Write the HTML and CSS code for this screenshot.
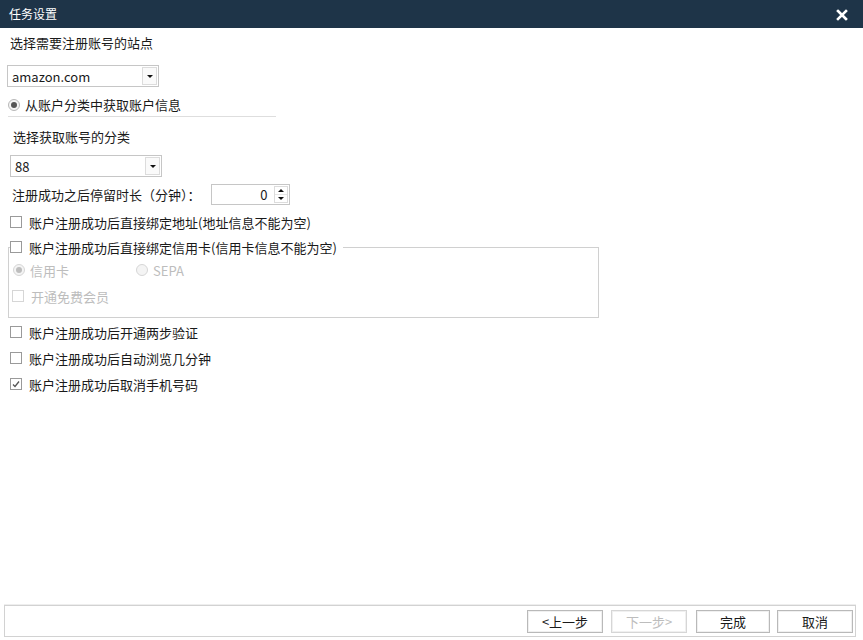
FILE: index.html
```html
<!DOCTYPE html>
<html lang="zh-CN">
<head>
    <meta charset="UTF-8">
    <title>任务设置</title>
    <link rel="stylesheet" href="styles.css">
</head>
<body>
<div class="dialog">
    <div class="titlebar">
        <span class="title">任务设置</span>
        <svg class="close" width="12" height="12" viewBox="0 0 12 12">
            <path d="M2 2 L10 10 M10 2 L2 10" stroke="#fff" stroke-width="2.6" stroke-linecap="square"/>
        </svg>
    </div>

    <div class="content">
        <div class="label site-label">选择需要注册账号的站点</div>
        <div class="combo site-combo">
            <span class="combo-text">amazon.com</span>
            <span class="combo-btn"><i class="arrow-down"></i></span>
        </div>

        <div class="radio-row source-row">
            <span class="radio checked"></span>
            <span>从账户分类中获取账户信息</span>
        </div>

        <div class="label cat-label">选择获取账号的分类</div>
        <div class="combo cat-combo">
            <span class="combo-text">88</span>
            <span class="combo-btn"><i class="arrow-down"></i></span>
        </div>

        <div class="spin-row">
            <span>注册成功之后停留时长（分钟）：</span>
            <div class="spin">
                <span class="spin-value">0</span>
                <span class="spin-btns">
                    <span class="spin-up"><i class="arrow-up"></i></span>
                    <span class="spin-down"><i class="arrow-down"></i></span>
                </span>
            </div>
        </div>

        <div class="check-row first-check">
            <span class="check"></span>
            <span>账户注册成功后直接绑定地址(地址信息不能为空)</span>
        </div>

        <fieldset class="group">
            <legend class="check-row">
                <span class="check"></span>
                <span>账户注册成功后直接绑定信用卡(信用卡信息不能为空)</span>
            </legend>
            <div class="group-radios disabled">
                <span class="radio-opt"><span class="radio checked"></span>信用卡</span>
                <span class="radio-opt sepa"><span class="radio"></span>SEPA</span>
            </div>
            <div class="check-row group-check disabled">
                <span class="check"></span>
                <span>开通免费会员</span>
            </div>
        </fieldset>

        <div class="check-row after-group">
            <span class="check"></span>
            <span>账户注册成功后开通两步验证</span>
        </div>
        <div class="check-row next-check">
            <span class="check"></span>
            <span>账户注册成功后自动浏览几分钟</span>
        </div>
        <div class="check-row next-check">
            <span class="check checked">
                <svg width="10" height="10" viewBox="0 0 10 10"><path d="M2 5.5 L4 7.5 L8 2.5" fill="none" stroke="#555" stroke-width="1.3"/></svg>
            </span>
            <span>账户注册成功后取消手机号码</span>
        </div>
    </div>

    <div class="footer">
        <button class="btn">&lt;上一步</button>
        <button class="btn" disabled>下一步&gt;</button>
        <button class="btn btn-done">完成</button>
        <button class="btn btn-cancel">取消</button>
    </div>
</div>
</body>
</html>
```

FILE: styles.css
```css
* {
    box-sizing: border-box;
}
body {
    margin: 0;
    font-family: "Noto Sans CJK SC", "Microsoft YaHei", sans-serif;
    font-size: 13px;
    color: #1a1a1a;
    background-color: #fff;
}
.dialog {
    width: 863px;
    height: 640px;
    display: flex;
    flex-direction: column;
}
.titlebar {
    height: 28px;
    background-color: #1e3448;
    display: flex;
    align-items: center;
    justify-content: space-between;
    padding: 0 15px 0 9px;
}
.title {
    color: #fff;
    font-size: 12px;
    line-height: 1;
}
.close {
    margin-top: 2px;
}
.content {
    flex: 1;
    display: flex;
    flex-direction: column;
    align-items: flex-start;
}
.label {
    height: 20px;
    line-height: 20px;
}
.site-label {
    margin: 5px 0 0 10px;
}
.combo {
    width: 152px;
    height: 22px;
    border: 1px solid #c6c6c6;
    display: flex;
    align-items: center;
    justify-content: space-between;
    padding: 0 1px 0 4px;
    background-color: #fff;
}
.combo-text {
    line-height: 1;
}
.combo-btn {
    width: 15px;
    height: 18px;
    border: 1px solid #dcdcdc;
    background-color: #fafafa;
    display: flex;
    align-items: center;
    justify-content: center;
}
.arrow-down {
    width: 0;
    height: 0;
    border-left: 3px solid transparent;
    border-right: 3px solid transparent;
    border-top: 3px solid #111;
}
.arrow-up {
    width: 0;
    height: 0;
    border-left: 3px solid transparent;
    border-right: 3px solid transparent;
    border-bottom: 3px solid #111;
}
.site-combo {
    margin: 12px 0 0 7px;
}
.radio-row {
    display: flex;
    align-items: center;
    gap: 5px;
}
.source-row {
    margin: 7px 0 0 8px;
    width: 268px;
    height: 23px;
    border-bottom: 1px solid #dedede;
    padding-bottom: 1px;
}
.radio {
    width: 12px;
    height: 12px;
    border-radius: 50%;
    border: 1px solid #b8b8b8;
    background-color: #f4f4f4;
    display: inline-flex;
    align-items: center;
    justify-content: center;
}
.radio.checked::after {
    content: "";
    width: 6px;
    height: 6px;
    border-radius: 50%;
    background-color: #555;
}
.cat-label {
    margin: 10px 0 0 13px;
}
.cat-combo {
    margin: 8px 0 0 10px;
}
.spin-row {
    margin: 7px 0 0 12px;
    height: 21px;
    display: flex;
    align-items: center;
}
.spin {
    margin-left: 10px;
    width: 79px;
    height: 21px;
    border: 1px solid #c6c6c6;
    display: flex;
    align-items: center;
    justify-content: flex-end;
    padding-right: 1px;
}
.spin-value {
    margin-right: 6px;
}
.spin-btns {
    width: 14px;
    height: 17px;
    display: flex;
    flex-direction: column;
    border: 1px solid #dcdcdc;
}
.spin-up, .spin-down {
    flex: 1;
    display: flex;
    align-items: center;
    justify-content: center;
}
.spin-up {
    border-bottom: 1px solid #e6e6e6;
}
.check-row {
    height: 20px;
    display: flex;
    align-items: center;
    gap: 7px;
    margin-left: 10px;
}
.check {
    width: 12px;
    height: 12px;
    border: 1px solid #9a9a9a;
    background-color: #fff;
    display: inline-flex;
    align-items: center;
    justify-content: center;
    flex-shrink: 0;
}
.first-check {
    margin-top: 7px;
}
.group {
    margin: 5px 0 0 8px;
    width: 591px;
    padding: 0 0 11px 0;
    border: 1px solid #d0d0d0;
    box-shadow: inset 1px 1px 0 #fff;
    min-inline-size: 0;
}
.group legend.check-row {
    padding: 0 6px 0 0;
    margin-left: 1px;
}
.disabled {
    color: #bdbdbd;
}
.disabled .check,
.disabled .radio {
    border-color: #d6d6d6;
}
.disabled .radio.checked::after {
    background-color: #bdbdbd;
}
.group-radios {
    margin: 3px 0 0 4px;
    height: 20px;
    display: flex;
    align-items: center;
}
.radio-opt {
    display: flex;
    align-items: center;
    gap: 5px;
}
.sepa {
    margin-left: 67px;
}
.group-check {
    margin: 6px 0 0 3px;
}
.after-group {
    margin-top: 4px;
}
.next-check {
    margin-top: 6px;
}
.footer {
    height: 32px;
    margin: 0 7px 3px 4px;
    border: 1px solid #d2d2d2;
    box-shadow: 0 -1px 0 #eeeeee;
    display: flex;
    align-items: center;
    justify-content: flex-end;
    padding-right: 2px;
}
.btn {
    width: 76px;
    height: 23px;
    margin-left: 8px;
    border: 1px solid #b9b9b9;
    background-color: #fff;
    box-shadow: inset 0 0 0 1px #f0f0f0;
    font-family: "Noto Sans CJK SC", "Microsoft YaHei", sans-serif;
    font-size: 13px;
    color: #1a1a1a;
    padding: 0;
}
.btn:disabled {
    color: #bdbdbd;
    border-color: #d6d6d6;
}
.btn-done {
    width: 74px;
    margin-left: 9px;
}
.btn-cancel {
    margin-left: 7px;
}
```
